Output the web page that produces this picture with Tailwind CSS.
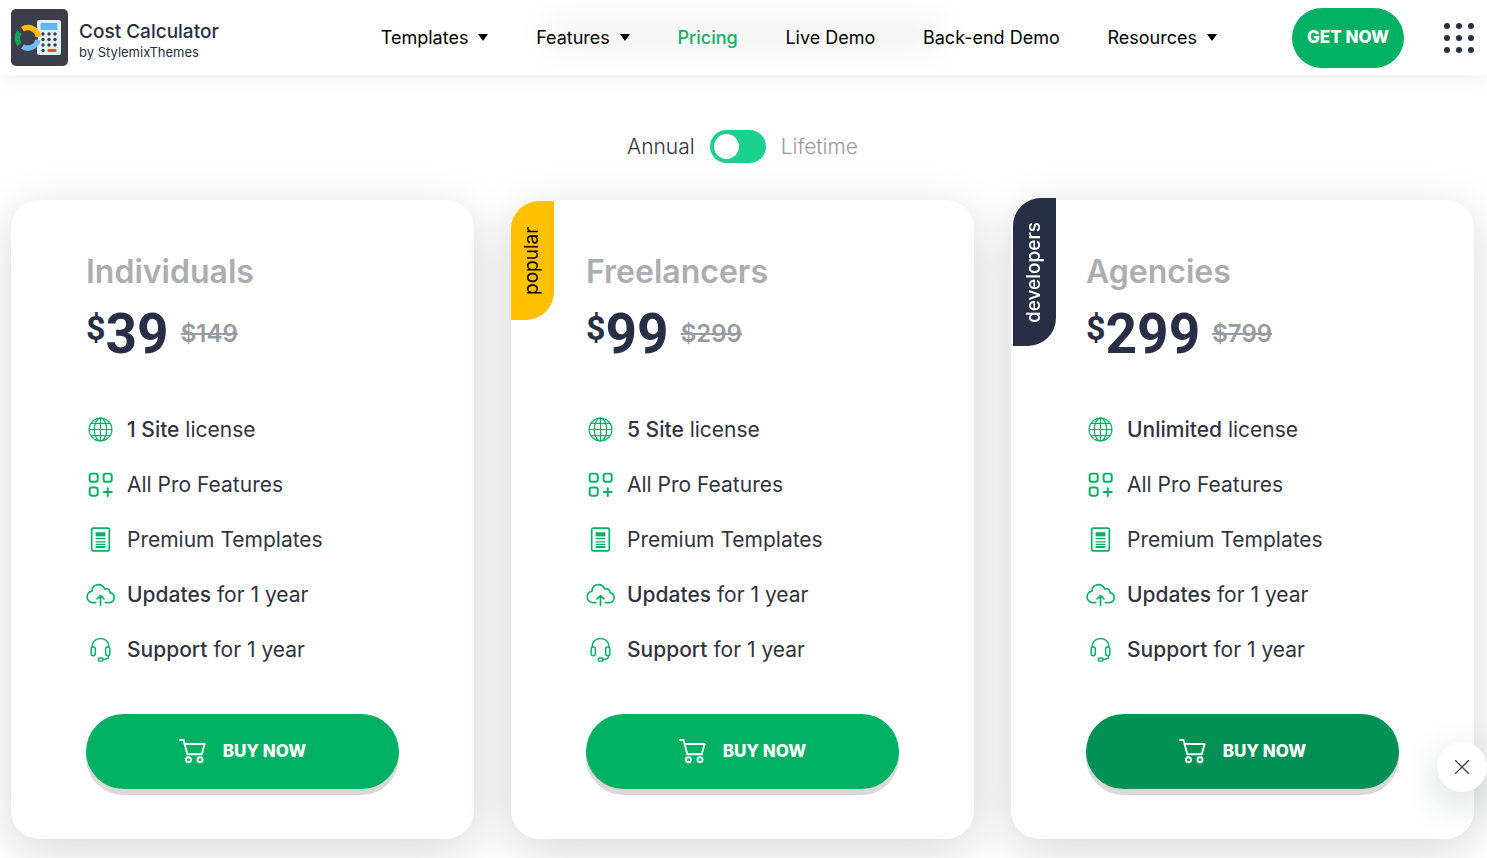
<!DOCTYPE html>
<html lang="en">
<head>
  <meta charset="UTF-8" />
  <meta name="viewport" content="width=device-width, initial-scale=1.0" />
  <title>Cost Calculator - Pricing</title>
  <script src="https://cdn.jsdelivr.net/npm/@tailwindcss/browser@4"></script>
</head>
<body class="min-h-screen overflow-x-hidden bg-white font-['Inter','Open_Sans',sans-serif] text-[#31343f]">

  <!-- Icon sprite -->
  <svg class="hidden" xmlns="http://www.w3.org/2000/svg">
    <symbol id="globe" viewBox="0 0 28 28" fill="none" stroke="currentColor" stroke-width="1.2">
      <circle cx="14" cy="14" r="11" />
      <ellipse cx="14" cy="14" rx="6" ry="11" />
      <path d="M14 3v22M3 14h22M4.800 8.200h18.400M4.800 19.800h18.400" />
    </symbol>
    <symbol id="features" viewBox="0 0 28 28" fill="none" stroke="currentColor" stroke-width="1.9" stroke-linecap="round">
      <rect x="3.500" y="3.500" width="7.800" height="7.800" rx="2" />
      <rect x="17" y="3.500" width="7.800" height="7.800" rx="2" />
      <rect x="3.500" y="17" width="7.800" height="7.800" rx="2" />
      <path d="M21 17.500v7.600M17.200 21.300h7.600" />
    </symbol>
    <symbol id="template" viewBox="0 0 28 28" fill="none" stroke="currentColor" stroke-width="1.6">
      <rect x="5.500" y="3" width="17" height="22" rx="1.500" />
      <path d="M9.300 7h9.400v4H9.300z" fill="currentColor" stroke="none" />
      <path d="M9.300 13.200h9.400M9.300 16.200h9.400M9.300 18.600h9.400" stroke-width="1.200" />
      <path d="M9.300 21.200h9.400" stroke-width="2" />
    </symbol>
    <symbol id="cloud" viewBox="0 0 28 28" fill="none" stroke="currentColor" stroke-width="1.6" stroke-linecap="round" stroke-linejoin="round">
      <path d="M9.500 21.800H6.800a5.600 5.600 0 0 1-1.100-11.100C6 6.500 9 4.500 12 4.500c3 0 5 1.600 6 4.100 3-1 5.300.9 5.200 3.700 2.300.3 4 2.200 4 4.700 0 2.700-2 4.800-4.600 4.800h-4" />
      <path d="M14 24.500v-9.300M10.700 18.300l3.300-3.300 3.300 3.300" />
    </symbol>
    <symbol id="headset" viewBox="0 0 28 28" fill="none" stroke="currentColor" stroke-width="1.4" stroke-linecap="round">
      <path d="M5.800 11.500C5.800 6.500 9.300 3.300 14 3.300s8.200 3.200 8.200 8.200" />
      <rect x="5" y="11.500" width="4" height="8.600" rx="2" />
      <rect x="19" y="11.500" width="4" height="8.600" rx="2" />
      <path d="M22 19.800c0 2.500-2 3.800-5.600 3.900" />
      <rect x="11.800" y="22.300" width="4.600" height="2.900" rx="1.400" />
    </symbol>
    <symbol id="cart" viewBox="0 0 28 28" fill="none" stroke="currentColor" stroke-width="1.900" stroke-linecap="round" stroke-linejoin="round">
      <path d="M1 2h3.600l3.700 14.200h14.500l2.800-10.200H5.600" />
      <circle cx="9.500" cy="21.800" r="2.500" />
      <circle cx="21" cy="21.800" r="2.500" />
    </symbol>
  </svg>

  <header class="relative z-10 flex h-[75px] items-center bg-white pl-[11px] pr-[13px] shadow-[0_0_20px_rgba(0,0,0,0.09)]">
    <!-- soft shade behind the menu -->
    <div class="absolute inset-0 overflow-hidden">
      <div class="mx-auto mt-3 h-11 w-[400px] rounded-full bg-black/4 blur-lg"></div>
    </div>

    <a href="#" class="relative flex items-center gap-[11px] text-[#282e45]">
      <svg class="size-[57px]" viewBox="0 0 57 57">
        <rect width="57" height="57" rx="5" fill="#3e3d4b" />
        <rect x="26" y="11" width="24" height="35" rx="2" fill="#e3f0f2" />
        <rect x="29.500" y="14" width="17" height="7" fill="#65b4f8" />
        <g fill="#3e3d4b">
          <circle cx="32" cy="25" r="1.700" /><circle cx="38" cy="25" r="1.700" /><circle cx="44" cy="25" r="1.700" />
          <circle cx="32" cy="30.500" r="1.700" /><circle cx="38" cy="30.500" r="1.700" /><circle cx="44" cy="30.500" r="1.700" />
          <circle cx="32" cy="36" r="1.700" /><circle cx="38" cy="36" r="1.700" /><circle cx="44" cy="36" r="1.700" />
          <circle cx="32" cy="41.500" r="1.700" />
        </g>
        <rect x="36.500" y="40" width="9" height="3" rx="1" fill="#e8502b" />
        <circle cx="17" cy="29" r="10" fill="#3e3d4b" />
        <g fill="none" stroke-width="5.500">
          <path d="M11.500 20.300A10.300 10.300 0 0 1 27.300 28" stroke="#fdbc0b" />
          <path d="M8.500 35.500A10.300 10.300 0 0 1 8.500 23" stroke="#13a35b" />
          <path d="M27 31A10.300 10.300 0 0 1 11.500 37.500" stroke="#72b9f5" />
        </g>
      </svg>
      <span>
        <span class="block pt-1 text-[19px] leading-6 font-medium">Cost Calculator</span>
        <span class="block text-[13px] leading-4">by StylemixThemes</span>
      </span>
    </a>

    <nav class="relative ml-[162px] mr-[75px] flex flex-1 items-center justify-between text-[18px] text-black whitespace-nowrap">
      <a href="#" class="flex items-center gap-2.5">Templates <svg class="w-[10px]" viewBox="0 0 10 7"><path d="M0 0h10L5 7z" /></svg></a>
      <a href="#" class="flex items-center gap-2.5">Features <svg class="w-[10px]" viewBox="0 0 10 7"><path d="M0 0h10L5 7z" /></svg></a>
      <a href="#" class="font-medium text-[#13b068]">Pricing</a>
      <a href="#">Live Demo</a>
      <a href="#">Back-end Demo</a>
      <a href="#" class="flex items-center gap-2.5">Resources <svg class="w-[10px]" viewBox="0 0 10 7"><path d="M0 0h10L5 7z" /></svg></a>
    </nav>

    <button type="button" class="relative h-[60px] w-28 rounded-full bg-[#00b163] text-[17px] font-extrabold text-white">GET NOW</button>
    <button type="button" aria-label="Menu" class="relative ml-10 text-[#282e45]">
      <svg class="size-[30px]" viewBox="0 0 30 30" fill="currentColor">
        <circle cx="3" cy="3" r="3" /><circle cx="15" cy="3" r="3" /><circle cx="27" cy="3" r="3" />
        <circle cx="3" cy="15" r="3" /><circle cx="15" cy="15" r="3" /><circle cx="27" cy="15" r="3" />
        <circle cx="3" cy="27" r="3" /><circle cx="15" cy="27" r="3" /><circle cx="27" cy="27" r="3" />
      </svg>
    </button>
  </header>

  <main class="pl-[11px] pr-[13px] pt-[55px]">
    <div class="flex h-[33px] items-center justify-center gap-[15px] text-[21px] font-light">
      <label for="billing">Annual</label>
      <input id="billing" type="checkbox" role="switch" class="h-[33px] w-14 appearance-none rounded-full bg-[#1bd08d] p-1 before:block before:size-[25px] before:rounded-full before:bg-white checked:before:ml-auto" />
      <label for="billing" class="text-[#999]">Lifetime</label>
    </div>

    <div id="plans" class="mt-[37px] grid grid-cols-3 gap-[37px]"></div>
  </main>

  <button type="button" aria-label="Close" class="fixed right-0 bottom-[66px] flex size-[50px] items-center justify-center rounded-full bg-white text-[#444] shadow-[0_12px_40px_rgba(30,60,60,0.2)]">
    <svg class="size-[14px]" viewBox="0 0 14 14" stroke="currentColor" stroke-width="1.3"><path d="M0 0l14 14M14 0L0 14" /></svg>
  </button>

  <script>
    const plans = [
      { name: 'Individuals', price: 39, old: 149, sites: '1 Site', button: 'bg-[#00b163]', badge: '' },
      { name: 'Freelancers', price: 99, old: 299, sites: '5 Site', button: 'bg-[#00b163]',
        badge: '<span class="absolute top-px left-0 flex h-[119px] w-[43px] rotate-180 items-center justify-center rounded-tl-[28px] rounded-br-[28px] bg-[#ffc000] text-[19px] text-black [writing-mode:vertical-rl]">popular</span>' },
      { name: 'Agencies', price: 299, old: 799, sites: 'Unlimited', button: 'bg-[#029154]',
        badge: '<span class="absolute -top-0.5 left-0.5 flex h-[148px] w-[43px] rotate-180 items-center justify-center rounded-tl-[28px] rounded-br-[28px] bg-[#282e45] text-[19px] font-medium text-white [writing-mode:vertical-rl]">developers</span>' }
    ];

    function row(icon, text) {
      return `<li class="flex h-[55px] items-center gap-3"><svg class="size-[29px] shrink-0 text-[#00b163]"><use href="#${icon}" /></svg><span>${text}</span></li>`;
    }

    document.getElementById('plans').innerHTML = plans.map(p => `
      <section class="relative rounded-[28px] bg-white px-[75px] pt-[52px] pb-[50px] shadow-[0_12px_50px_rgba(0,0,0,0.16)]">
        ${p.badge}
        <h2 class="text-[32px] leading-10 font-semibold text-[#abadb3]">${p.name}</h2>
        <div class="mt-3 flex h-[60px] items-center font-bold text-[#282e45]">
          <span class="self-start font-['Roboto'] text-[34px] leading-[48px]">$</span>
          <span class="font-['Roboto'] text-[55px] leading-[60px]">${p.price}</span>
          <del class="ml-3 text-[24px] font-semibold text-[#999ba2]">$${p.old}</del>
        </div>
        <ul class="mt-[38px] text-[21px]">
          ${row('globe', `<b class="font-medium">${p.sites}</b> license`)}
          ${row('features', 'All Pro Features')}
          ${row('template', 'Premium Templates')}
          ${row('cloud', '<b class="font-medium">Updates</b> for 1 year')}
          ${row('headset', '<b class="font-medium">Support</b> for 1 year')}
        </ul>
        <button type="button" class="mt-[37px] flex h-[75px] w-full items-center justify-center gap-4 rounded-full ${p.button} text-[17px] font-extrabold text-white shadow-[0_6px_0_#d9d9d9]">
          <svg class="size-7"><use href="#cart" /></svg>BUY NOW
        </button>
      </section>`).join('');
  </script>
</body>
</html>
